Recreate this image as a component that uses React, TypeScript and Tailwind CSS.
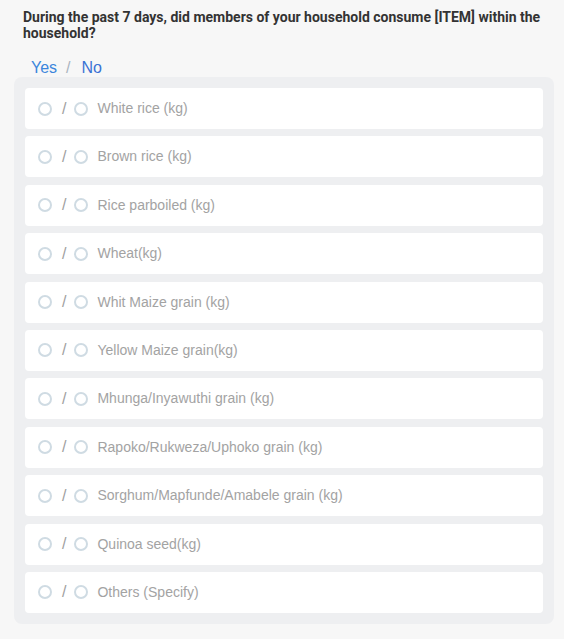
const items = [
  'White rice (kg)',
  'Brown rice (kg)',
  'Rice parboiled (kg)',
  'Wheat(kg)',
  'Whit Maize grain (kg)',
  'Yellow Maize grain(kg)',
  'Mhunga/Inyawuthi grain (kg)',
  'Rapoko/Rukweza/Uphoko grain (kg)',
  'Sorghum/Mapfunde/Amabele grain (kg)',
  'Quinoa seed(kg)',
  'Others (Specify)',
];

function Radio() {
  return <span className="inline-block w-[14px] h-[14px] rounded-full border-2 border-[#cfdbe3] bg-white" />;
}

export default function App() {
  return (
    <div className="min-h-[639px] bg-[#f7f7f7] font-['Roboto',sans-serif]">
      <div className="pt-[9px] pl-[23px] pr-[20px]">
        <p className="text-[14px] leading-[16px] font-bold text-[#333]">
          During the past 7 days, did members of your household consume [ITEM] within the household?
        </p>
      </div>
      <div className="pl-[31px] pt-[17px] h-[36px] flex items-start text-[16px] leading-[20px] font-['Liberation_Sans',Arial,sans-serif]">
        <span className="text-[#3b86dc]">Yes</span>
        <span className="ml-[9px] mr-[11px] text-[#aab4c0]">/</span>
        <span className="text-[#3b72d4]">No</span>
      </div>
      <div className="mx-[14px] w-[540px] bg-[#eeeff1] rounded-[8px] p-[11px] flex flex-col gap-[7.4px]">
        {items.map((label) => (
          <div
            key={label}
            className="h-[41px] bg-white rounded-[4px] flex items-center pl-[13px] font-['Liberation_Sans',Arial,sans-serif]"
          >
            <Radio />
            <span className="ml-[10px] mr-[8px] text-[16px] text-[#a0a0a0] leading-none">/</span>
            <Radio />
            <span className="ml-[9px] text-[14px] text-[#a3a3a3]">{label}</span>
          </div>
        ))}
      </div>
    </div>
  );
}
